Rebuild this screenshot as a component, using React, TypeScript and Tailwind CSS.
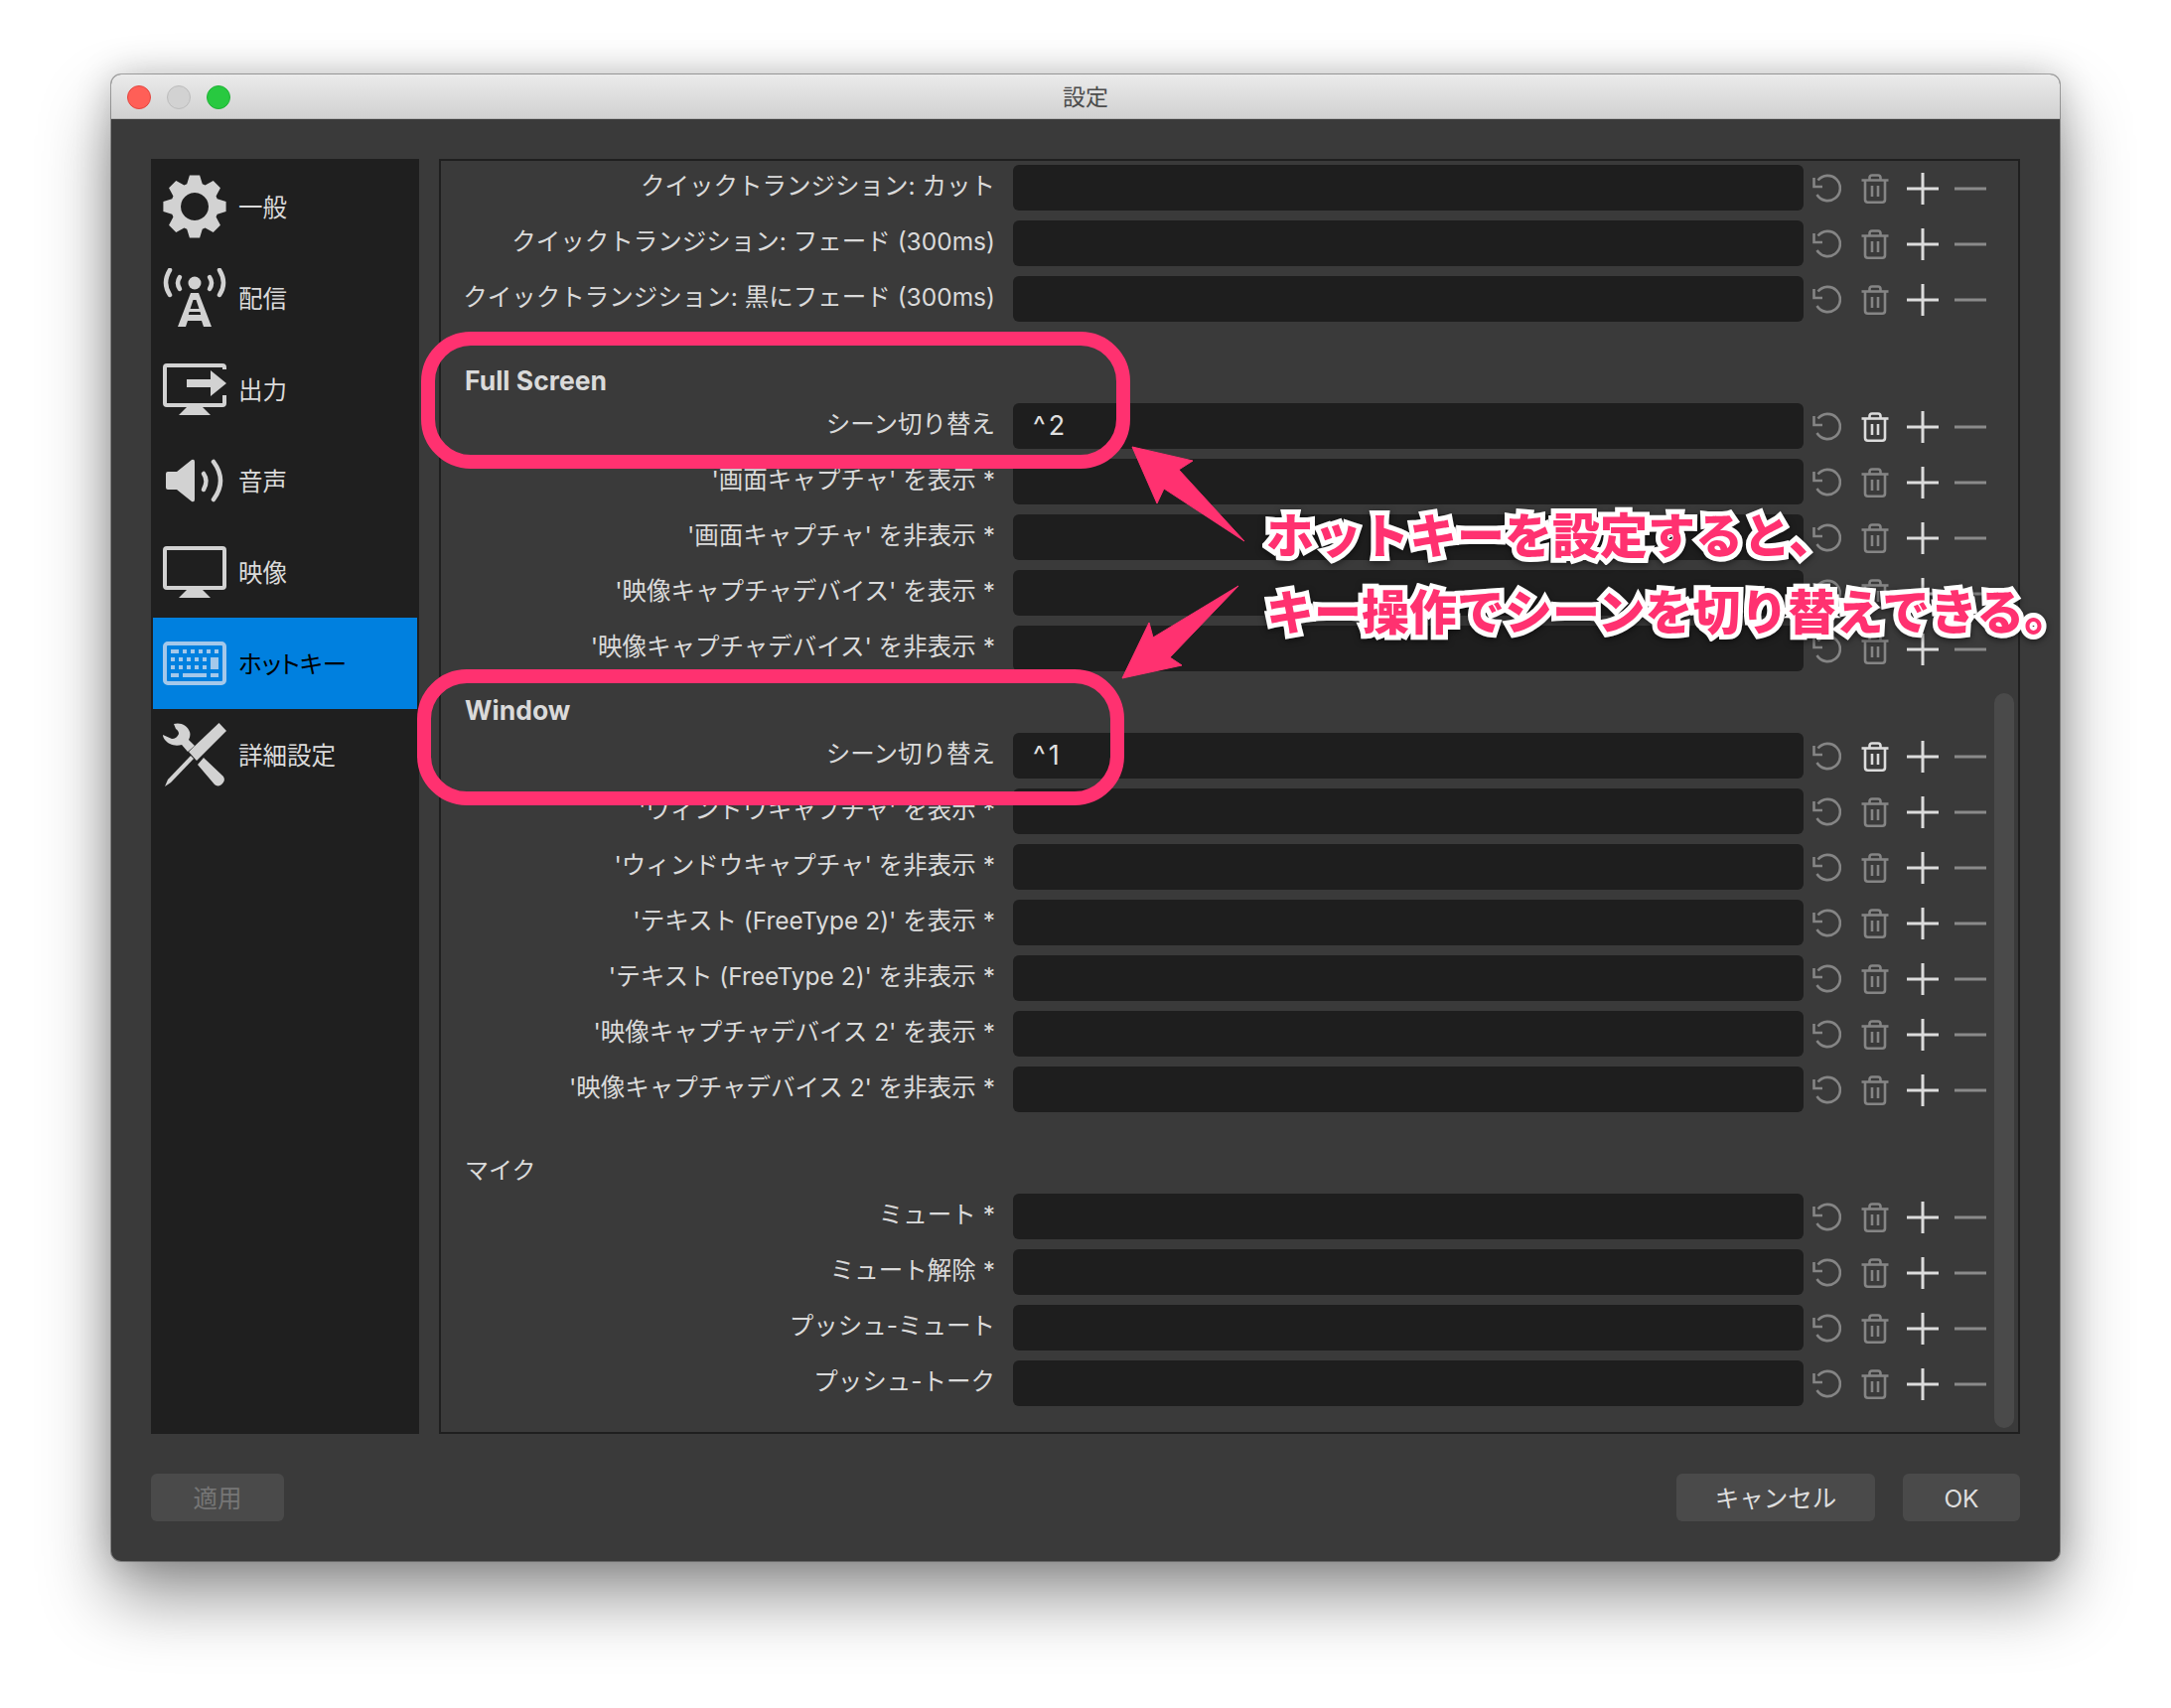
import React from "react";

const gearPoints = (() => {
  const pts: string[] = [];
  const n = 8;
  for (let i = 0; i < n; i++) {
    const a = (i * 2 * Math.PI) / n - Math.PI / 2;
    const p = (r: number, d: number) => {
      const t = a + d;
      return `${(32 + r * Math.cos(t)).toFixed(2)},${(32 + r * Math.sin(t)).toFixed(2)}`;
    };
    pts.push(p(24, -0.33), p(32, -0.16), p(32, 0.16), p(24, 0.33));
  }
  return pts.join(" ");
})();

const GearIcon = () => (
  <svg width="64" height="64" viewBox="0 0 64 64" className="shrink-0">
    <path fillRule="evenodd" fill="#d2d2d2" d={`M${gearPoints.replace(/ /g, " L")} Z M32 18 a14 14 0 1 0 0.01 0 Z`} />
  </svg>
);

const AntennaIcon = () => (
  <svg width="64" height="60" viewBox="0 0 64 60" className="shrink-0">
    <circle cx="32" cy="15" r="6.5" fill="#d2d2d2" />
    <g fill="none" stroke="#d2d2d2" strokeWidth="4.5" strokeLinecap="round">
      <path d="M7 2 Q-1 15 7 27" />
      <path d="M57 2 Q65 15 57 27" />
      <path d="M17 9 Q13 15 17 21" />
      <path d="M47 9 Q51 15 47 21" />
    </g>
    <path fill="#d2d2d2" fillRule="evenodd" d="M28 25 H36 L49 59 H41 L39 53 H25 L23 59 H15 Z M30.5 32 L27.5 41 H36.5 L33.5 32 Z M26.5 44 L25.8 47 H38.2 L37.5 44 Z" />
  </svg>
);

const OutputIcon = () => (
  <svg width="64" height="52" viewBox="0 0 64 52" className="shrink-0">
    <path fill="none" stroke="#d2d2d2" strokeWidth="4" d="M62 6 V4 Q62 2 60 2 H4 Q2 2 2 4 V40 Q2 42 4 42 H60 Q62 42 62 40 V32" />
    <path fill="#d2d2d2" d="M24 16 H48 V7 L64 20 L48 33 V24 H24 Z" />
    <path fill="#d2d2d2" d="M24 44 H40 L48 52 H16 Z" />
  </svg>
);

const SpeakerIcon = () => (
  <svg width="64" height="44" viewBox="0 0 64 44" className="shrink-0">
    <path fill="#d2d2d2" d="M5 13 H14 L29 1 Q32 0 32 3 V41 Q32 44 29 43 L14 31 H5 Q3 31 3 29 V15 Q3 13 5 13 Z" />
    <g fill="none" stroke="#d2d2d2" strokeWidth="4.5" strokeLinecap="round">
      <path d="M41 15 Q46 22 41 31" />
      <path d="M51 3 Q65 22 51 41" />
    </g>
  </svg>
);

const MonitorIcon = () => (
  <svg width="64" height="52" viewBox="0 0 64 52" className="shrink-0">
    <rect x="2" y="2" width="60" height="40" rx="2" fill="none" stroke="#d2d2d2" strokeWidth="4" />
    <path fill="#d2d2d2" d="M24 44 H40 L48 52 H16 Z" />
  </svg>
);

const KeyboardIcon = () => {
  const c = "#a4c8ea";
  const r1 = [20, 28, 36, 44, 52];
  const r2 = [8, 16, 24, 32, 40];
  const r3 = [8, 16, 24, 32, 40];
  return (
    <svg width="64" height="44" viewBox="0 0 64 44" className="shrink-0">
      <rect x="2" y="2" width="60" height="40" rx="3" fill="none" stroke={c} strokeWidth="4" />
      <g fill={c}>
        <rect x="8" y="8" width="8" height="4" />
        {r1.map((x) => <rect key={x} x={x} y="8" width="4" height="4" />)}
        {r2.map((x) => <rect key={x} x={x} y="16" width="4" height="4" />)}
        {r3.map((x) => <rect key={x} x={x} y="24" width="4" height="4" />)}
        <rect x="48" y="16" width="8" height="12" />
        <rect x="8" y="32" width="8" height="4" />
        <rect x="20" y="32" width="24" height="4" />
        <rect x="48" y="32" width="8" height="4" />
      </g>
    </svg>
  );
};

const ToolsIcon = () => (
  <svg width="64" height="64" viewBox="0 0 64 64" className="shrink-0">
    <g fill="#d2d2d2">
      <path d="M56.5 0 L64 8 L34 38 L26 29 Z" />
      <path d="M28 33 L31 36 L8 60 L2 64 L5 57 Z" />
      <path d="M11 1 C17 -1 25 2 27 9 C28 12 27 15 26 17 L32 23 L25 29 L19 22 C15 23 11 23 7 21 C3 19 0 15 0 12 L9 16 C12 16 15 14 16 11 C16 9 15 7 13 6 Z" />
      <path d="M35 42 L41 35 L60 53 C63 56 62 59 60 61 C58 64 54 64 52 62 Z" />
    </g>
  </svg>
);

const UndoIcon = () => (
  <svg width="30" height="30" viewBox="0 0 30 30" className="shrink-0 ml-2 translate-y-[1px]">
    <g fill="none" stroke="#858585" strokeWidth="2.6">
      <path d="M6.5 6.5 A12.6 12.6 0 1 1 5.5 21" />
      <path d="M2.5 4 V13 H11" />
    </g>
  </svg>
);

const TrashIcon = ({ active }: { active?: boolean }) => {
  const c = active ? "#dcdcdc" : "#858585";
  return (
    <svg width="28" height="30" viewBox="0 0 28 30" className="shrink-0 ml-[20px] translate-y-[1px]">
      <g fill="none" stroke={c} strokeWidth="2.6">
        <path d="M0.5 6.5 H27.5" />
        <path d="M8.5 6.5 V4 Q8.5 1.5 11 1.5 H17 Q19.5 1.5 19.5 4 V6.5" />
        <path d="M4 6.5 V26 Q4 28.7 6.7 28.7 H21.3 Q24 28.7 24 26 V6.5" />
        <path d="M11 12 V23 M17 12 V23" />
      </g>
    </svg>
  );
};

const PlusIcon = () => (
  <svg width="32" height="32" viewBox="0 0 32 32" className="shrink-0 ml-[18px] translate-y-[1px]">
    <path d="M0 16 H32 M16 0 V32" stroke="#dcdcdc" strokeWidth="3" />
  </svg>
);

const MinusIcon = () => (
  <svg width="32" height="32" viewBox="0 0 32 32" className="shrink-0 ml-[16px] translate-y-[1px]">
    <path d="M0 16 H32" stroke="#8a8a8a" strokeWidth="3" />
  </svg>
);

const Row = ({ label, value, active }: { label: string; value?: string; active?: boolean }) => (
  <div className="flex items-center h-[46px] mb-[10px] shrink-0">
    <div className="w-[558px] shrink-0 text-right text-[24.5px] leading-[46px] text-[#dadada] whitespace-nowrap -translate-y-[2px]">
      {label}
    </div>
    <div className="ml-[18px] w-[796px] h-[46px] shrink-0 rounded-[6px] bg-[#1e1e1e] pl-[20px] text-[27px] tracking-[3px] leading-[46px] text-[#e0e0e0]">
      {value}
    </div>
    <UndoIcon />
    <TrashIcon active={active} />
    <PlusIcon />
    <MinusIcon />
  </div>
);

const Heading = ({ children, bold, top }: { children: React.ReactNode; bold?: boolean; top: string }) => (
  <div className={`${top} pl-[24px] h-[38px] shrink-0 leading-[30px] text-[#dadada] ${bold ? "font-bold text-[26.5px]" : "text-[24px]"}`}>
    {children}
  </div>
);

const navItems = [
  { label: "一般", icon: <GearIcon /> },
  { label: "配信", icon: <AntennaIcon /> },
  { label: "出力", icon: <OutputIcon /> },
  { label: "音声", icon: <SpeakerIcon /> },
  { label: "映像", icon: <MonitorIcon /> },
  { label: "ホットキー", icon: <KeyboardIcon />, active: true },
  { label: "詳細設定", icon: <ToolsIcon /> },
];

const Btn = ({ children, w, disabled }: { children: React.ReactNode; w: string; disabled?: boolean }) => (
  <div className={`${w} h-[48px] rounded-[6px] bg-[#4a4a4a] flex items-center justify-center text-[24.5px] pt-[2px] ${disabled ? "text-[#767676]" : "text-[#dedede]"}`}>
    {children}
  </div>
);

export default function App() {
  return (
    <div className="relative w-[2186px] h-[1720px] overflow-hidden bg-white pt-[75px] pl-[112px] [font-family:Inter,'Noto_Sans_CJK_JP',sans-serif]">
      <div className="w-[1962px] h-[1497px] rounded-[10px] overflow-hidden bg-[#3a3a3a] shadow-[0_36px_70px_rgba(0,0,0,0.42),0_0_36px_rgba(0,0,0,0.2),0_0_0_1px_rgba(0,0,0,0.3)] flex flex-col">
        {/* title bar */}
        <div className="h-[45px] shrink-0 grid grid-cols-3 items-center bg-gradient-to-b from-[#ebebeb] to-[#d1d1d1] border-b border-[#b5b5b5]">
          <div className="flex gap-4 pl-4 pt-[1px]">
            <div className="w-6 h-6 rounded-full bg-[#ff5f57] border border-[#e2463f]" />
            <div className="w-6 h-6 rounded-full bg-[#d2d2d2] border border-[#bcbcbc]" />
            <div className="w-6 h-6 rounded-full bg-[#28c940] border border-[#1fb135]" />
          </div>
          <div className="text-center text-[23px] text-[#4c4c4c] pt-[3px]">設定</div>
          <div />
        </div>

        {/* body */}
        <div className="flex-1 flex flex-col p-10 gap-10 min-h-0">
          <div className="h-[1284px] flex gap-5 shrink-0">
            <div className="w-[270px] shrink-0 bg-[#1f1f1f] p-[2px]">
              {navItems.map((it) => (
                <div key={it.label} className={`h-[92px] flex items-center pl-[10px] gap-[12px] ${it.active ? "bg-[#0080df]" : ""}`}>
                  {it.icon}
                  <span className={`text-[24.5px] pt-[2px] [font-feature-settings:'palt'] ${it.active ? "text-black" : "text-[#dadada]"}`}>{it.label}</span>
                </div>
              ))}
            </div>
            <div className="relative flex-1 flex flex-col border-2 border-[#1f1f1f] pt-[4px]">
              <Row label="クイックトランジション: カット" />
              <Row label="クイックトランジション: フェード (300ms)" />
              <Row label="クイックトランジション: 黒にフェード (300ms)" />
              <Heading bold top="mt-[34px]">Full Screen</Heading>
              <Row label="シーン切り替え" value="^2" active />
              <Row label="'画面キャプチャ' を表示 *" />
              <Row label="'画面キャプチャ' を非表示 *" />
              <Row label="'映像キャプチャデバイス' を表示 *" />
              <Row label="'映像キャプチャデバイス' を非表示 *" />
              <Heading bold top="mt-[14px]">Window</Heading>
              <Row label="シーン切り替え" value="^1" active />
              <Row label="'ウィンドウキャプチャ' を表示 *" />
              <Row label="'ウィンドウキャプチャ' を非表示 *" />
              <Row label="'テキスト (FreeType 2)' を表示 *" />
              <Row label="'テキスト (FreeType 2)' を非表示 *" />
              <Row label="'映像キャプチャデバイス 2' を表示 *" />
              <Row label="'映像キャプチャデバイス 2' を非表示 *" />
              <Heading top="mt-[34px]">マイク</Heading>
              <Row label="ミュート *" />
              <Row label="ミュート解除 *" />
              <Row label="プッシュ-ミュート" />
              <Row label="プッシュ-トーク" />
              <div className="absolute right-[4px] top-[536px] w-[20px] h-[740px] rounded-full bg-[#4a4a4a]" />
            </div>
          </div>
          <div className="flex items-center shrink-0">
            <Btn w="w-[134px]" disabled>適用</Btn>
            <div className="flex-1" />
            <Btn w="w-[200px]">キャンセル</Btn>
            <div className="w-[28px]" />
            <Btn w="w-[118px]">OK</Btn>
          </div>
        </div>
      </div>

      {/* annotations */}
      <div className="absolute left-[424px] top-[334px] w-[714px] h-[138px] rounded-[50px] border-[14px] border-[#ff3170]" />
      <div className="absolute left-[420px] top-[674px] w-[712px] h-[137px] rounded-[50px] border-[14px] border-[#ff3170]" />
      <svg className="absolute left-0 top-0" width="2186" height="1720" viewBox="0 0 2186 1720">
        <path fill="#ff3170" stroke="#ff3170" strokeWidth="1" strokeLinejoin="round" d="M1140 450 L1201 464 L1187 473 L1253 545 L1172 492 L1165 507 Z" />
        <path fill="#ff3170" stroke="#ff3170" strokeWidth="1" strokeLinejoin="round" d="M1130 683 L1157 627 L1161 642 L1247 590 L1178 662 L1190 670 Z" />
      </svg>
      <div className="absolute left-[1275px] top-[508px] text-[48px] leading-[64px] font-black text-[#ff3170] whitespace-nowrap [-webkit-text-stroke:10px_white] [paint-order:stroke_fill] drop-shadow-[0_2px_3px_rgba(0,0,0,0.5)]">
        ホットキーを設定すると、
      </div>
      <div className="absolute left-[1275px] top-[585px] text-[48px] leading-[64px] font-black text-[#ff3170] whitespace-nowrap [-webkit-text-stroke:10px_white] [paint-order:stroke_fill] drop-shadow-[0_2px_3px_rgba(0,0,0,0.5)]">
        キー操作でシーンを切り替えできる。
      </div>
    </div>
  );
}
